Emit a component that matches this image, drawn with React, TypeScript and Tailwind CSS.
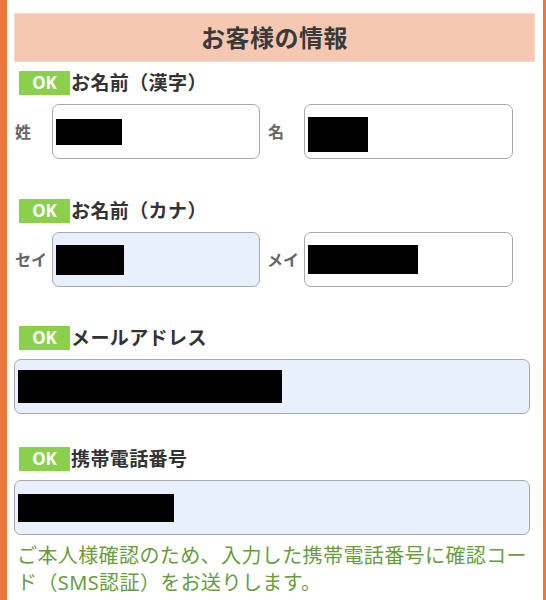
import React from "react";

const font = { fontFamily: '"Noto Sans", "Noto Sans CJK JP", sans-serif' };

const OkLabel = ({ text, className = "" }: { text: string; className?: string }) => (
  <div className={`flex items-center h-[24px] ${className}`}>
    <span className="w-[51px] h-[24px] ml-[5px] bg-[#8bd04b] text-white font-bold text-[17px] leading-[24px] text-center">
      OK
    </span>
    <span className="ml-[1px] text-[19px] font-bold text-[#333] leading-[24px] tracking-[0.4px]">{text}</span>
  </div>
);

const Field = ({
  blank,
  filled,
  className = "",
}: {
  blank: string;
  filled?: boolean;
  className?: string;
}) => (
  <div
    className={`h-[55px] rounded-[7px] border-[1.5px] border-[#a9a9a9] flex items-center pl-[3px] ${
      filled ? "bg-[#e8f0fe]" : "bg-white"
    } ${className}`}
  >
    <span className={`block bg-black ${blank}`}></span>
  </div>
);

const SideLabel = ({ text, className = "" }: { text: string; className?: string }) => (
  <span className={`text-[16px] font-bold text-[#666] leading-none ${className}`}>{text}</span>
);

export default function App() {
  return (
    <div
      className="w-[546px] h-[600px] overflow-hidden bg-white border-l-[7px] border-r-[3px] border-[#ef7637] pl-[7px] pr-[8px] pt-[13px]"
      style={font}
    >
      <div className="h-[49px] bg-[#f6c8b1] border border-[#f9d9c9] flex items-center justify-center">
        <h2 className="text-[24px] font-bold text-[#3a3a3a] tracking-[0.5px]">お客様の情報</h2>
      </div>

      <OkLabel text="お名前（漢字）" className="mt-[9px]" />
      <div className="mt-[9px] flex items-center">
        <SideLabel text="姓" className="w-[38px] pl-[1px]" />
        <Field blank="w-[66px] h-[26px]" className="w-[208px]" />
        <SideLabel text="名" className="w-[44px] pl-[8px]" />
        <Field blank="w-[60px] h-[35px] mt-[6px]" className="w-[209px]" />
      </div>

      <OkLabel text="お名前（カナ）" className="mt-[40px]" />
      <div className="mt-[9px] flex items-center">
        <SideLabel text="セイ" className="w-[38px] pl-[1px]" />
        <Field blank="w-[68px] h-[30px]" filled className="w-[208px]" />
        <SideLabel text="メイ" className="w-[44px] pl-[7px]" />
        <Field blank="w-[110px] h-[29px]" className="w-[209px]" />
      </div>

      <OkLabel text="メールアドレス" className="mt-[39px]" />
      <Field blank="w-[264px] h-[33px]" filled className="mt-[9px] mr-[5px]" />

      <OkLabel text="携帯電話番号" className="mt-[33px]" />
      <Field blank="w-[156px] h-[28px]" filled className="mt-[9px] mr-[5px]" />

      <p className="mt-[7px] pl-[3px] text-[20px] leading-[27px] tracking-[0.4px] text-[#6b9b3f]">
        ご本人様確認のため、入力した携帯電話番号に確認コード（SMS認証）をお送りします。
      </p>
    </div>
  );
}
